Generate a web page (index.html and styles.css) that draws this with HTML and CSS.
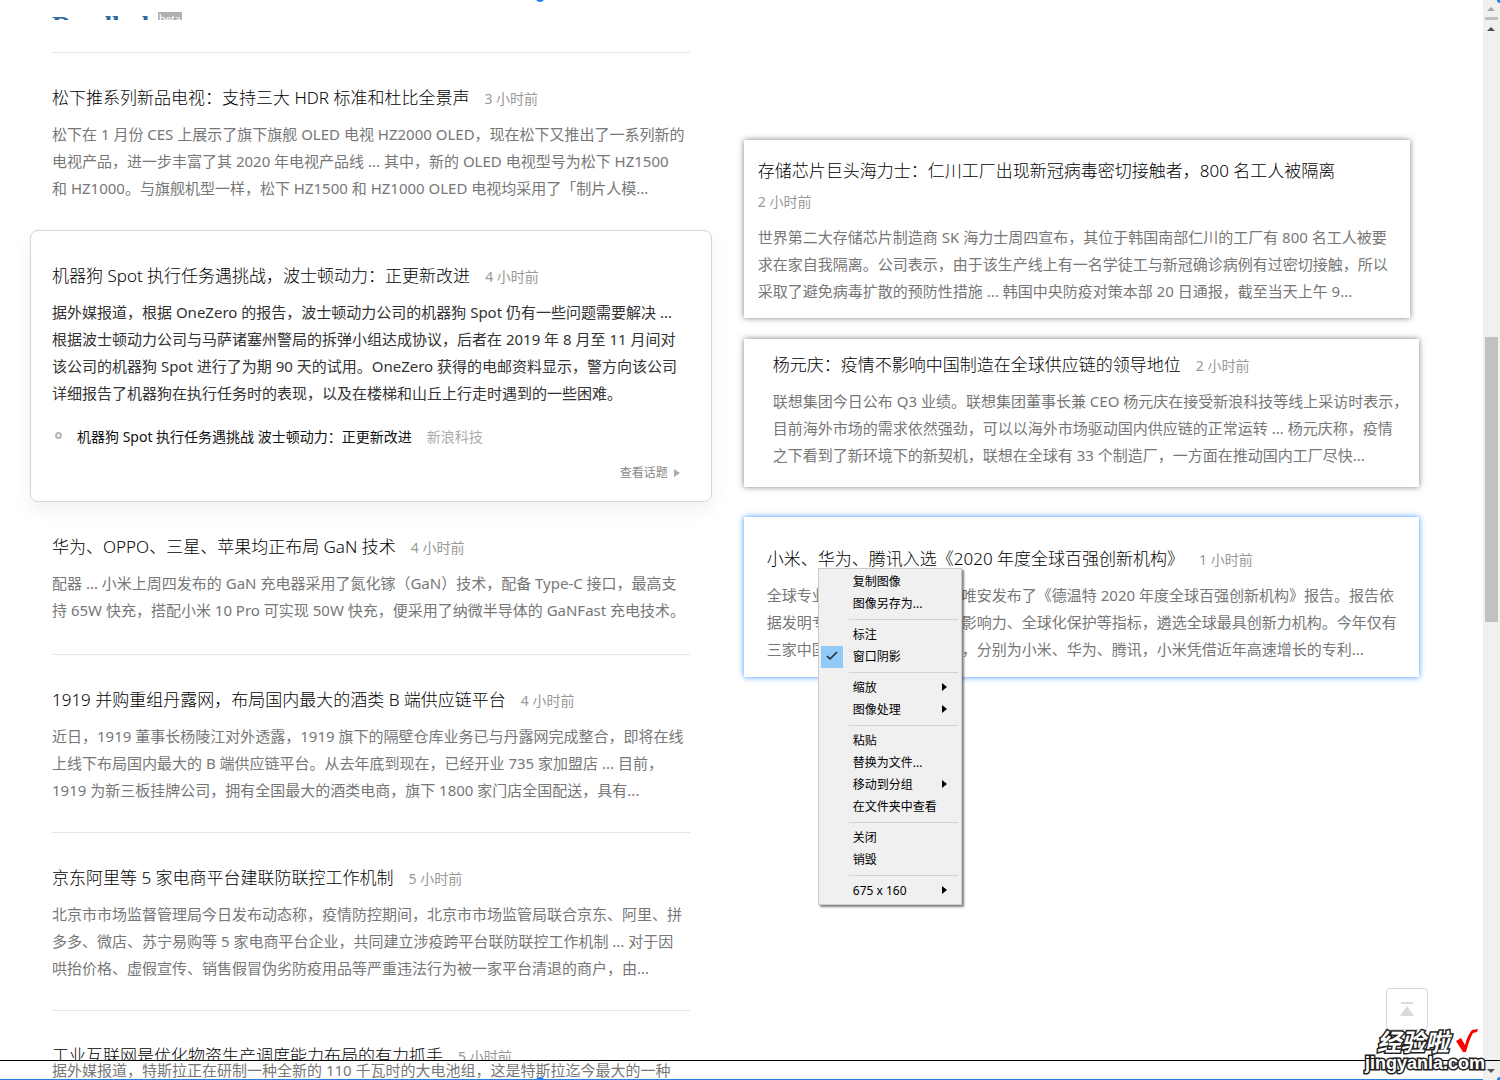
FILE: index.html
```html
<!DOCTYPE html>
<html lang="zh-CN">
<head>
<meta charset="utf-8">
<title>Readhub</title>
<link rel="stylesheet" href="styles.css">
</head>
<body>
<div class="page">
  <div class="content">
    <span class="handle handle-top"></span>
    <div class="columns">
      <main class="feed">
        <header class="brand"><a class="logo" href="#">Readhub</a><span class="beta">beta</span></header>
        <article class="story">
          <h2>松下推系列新品电视：支持三大 HDR 标准和杜比全景声<time>3 小时前</time></h2>
          <p>松下在 1 月份 CES 上展示了旗下旗舰 OLED 电视 HZ2000 OLED，现在松下又推出了一系列新的<br>电视产品，进一步丰富了其 2020 年电视产品线 ... 其中，新的 OLED 电视型号为松下 HZ1500<br>和 HZ1000。与旗舰机型一样，松下 HZ1500 和 HZ1000 OLED 电视均采用了「制片人模...</p>
        </article>
        <article class="story story-open">
          <h2>机器狗 Spot 执行任务遇挑战，波士顿动力：正更新改进<time>4 小时前</time></h2>
          <p>据外媒报道，根据 OneZero 的报告，波士顿动力公司的机器狗 Spot 仍有一些问题需要解决 ...<br>根据波士顿动力公司与马萨诸塞州警局的拆弹小组达成协议，后者在 2019 年 8 月至 11 月间对<br>该公司的机器狗 Spot 进行了为期 90 天的试用。OneZero 获得的电邮资料显示，警方向该公司<br>详细报告了机器狗在执行任务时的表现，以及在楼梯和山丘上行走时遇到的一些困难。</p>
          <ul class="sources">
            <li><a href="#">机器狗 Spot 执行任务遇挑战 波士顿动力：正更新改进</a><span>新浪科技</span></li>
          </ul>
          <a class="more" href="#">查看话题</a>
        </article>
        <article class="story story-short">
          <h2>华为、OPPO、三星、苹果均正布局 GaN 技术<time>4 小时前</time></h2>
          <p>配器 ... 小米上周四发布的 GaN 充电器采用了氮化镓（GaN）技术，配备 Type-C 接口，最高支<br>持 65W 快充，搭配小米 10 Pro 可实现 50W 快充，便采用了纳微半导体的 GaNFast 充电技术。</p>
        </article>
        <article class="story">
          <h2>1919 并购重组丹露网，布局国内最大的酒类 B 端供应链平台<time>4 小时前</time></h2>
          <p>近日，1919 董事长杨陵江对外透露，1919 旗下的隔壁仓库业务已与丹露网完成整合，即将在线<br>上线下布局国内最大的 B 端供应链平台。从去年底到现在，已经开业 735 家加盟店 ... 目前，<br>1919 为新三板挂牌公司，拥有全国最大的酒类电商，旗下 1800 家门店全国配送，具有...</p>
        </article>
        <article class="story">
          <h2>京东阿里等 5 家电商平台建联防联控工作机制<time>5 小时前</time></h2>
          <p>北京市市场监督管理局今日发布动态称，疫情防控期间，北京市市场监管局联合京东、阿里、拼<br>多多、微店、苏宁易购等 5 家电商平台企业，共同建立涉疫跨平台联防联控工作机制 ... 对于因<br>哄抬价格、虚假宣传、销售假冒伪劣防疫用品等严重违法行为被一家平台清退的商户，由...</p>
        </article>
        <article class="story">
          <h2>工业互联网是优化物资生产调度能力布局的有力抓手<time>5 小时前</time></h2>
        </article>
      </main>
      <section class="pins">
        <article class="pin pin-a">
          <h2>存储芯片巨头海力士：仁川工厂出现新冠病毒密切接触者，800 名工人被隔离</h2>
          <time>2 小时前</time>
          <p>世界第二大存储芯片制造商 SK 海力士周四宣布，其位于韩国南部仁川的工厂有 800 名工人被要<br>求在家自我隔离。公司表示，由于该生产线上有一名学徒工与新冠确诊病例有过密切接触，所以<br>采取了避免病毒扩散的预防性措施 ... 韩国中央防疫对策本部 20 日通报，截至当天上午 9...</p>
        </article>
        <article class="pin pin-b">
          <h2>杨元庆：疫情不影响中国制造在全球供应链的领导地位<time>2 小时前</time></h2>
          <p>联想集团今日公布 Q3 业绩。联想集团董事长兼 CEO 杨元庆在接受新浪科技等线上采访时表示，<br>目前海外市场的需求依然强劲，可以以海外市场驱动国内供应链的正常运转 ... 杨元庆称，疫情<br>之下看到了新环境下的新契机，联想在全球有 33 个制造厂，一方面在推动国内工厂尽快...</p>
        </article>
        <article class="pin pin-c">
          <h2>小米、华为、腾讯入选《2020 年度全球百强创新机构》<time>1 小时前</time></h2>
          <p>全球专业信息服务提供商科睿唯安发布了《德温特 2020 年度全球百强创新机构》报告。报告依<br>据发明专利的总数量、质量、影响力、全球化保护等指标，遴选全球最具创新力机构。今年仅有<br>三家中国大陆企业入选该榜单，分别为小米、华为、腾讯，小米凭借近年高速增长的专利...</p>
          <div class="menu" role="menu">
            <button type="button">复制图像</button>
            <button type="button">图像另存为...</button>
            <hr>
            <button type="button">标注</button>
            <button type="button" class="checked"><svg class="tick" viewBox="0 0 22 22" aria-hidden="true"><path d="M6 10l3 3 7-7" fill="none" stroke="#222" stroke-width="1.5"/></svg>窗口阴影</button>
            <hr>
            <button type="button" class="sub">缩放</button>
            <button type="button" class="sub">图像处理</button>
            <hr>
            <button type="button">粘贴</button>
            <button type="button">替换为文件...</button>
            <button type="button" class="sub">移动到分组</button>
            <button type="button">在文件夹中查看</button>
            <hr>
            <button type="button">关闭</button>
            <button type="button">销毁</button>
            <hr>
            <button type="button" class="sub">675 x 160</button>
          </div>
        </article>
      </section>
    </div>
    <footer class="strip"><p>据外媒报道，特斯拉正在研制一种全新的 110 千瓦时的大电池组，这是特斯拉迄今最大的一种</p></footer>
    <span class="handle handle-bottom"></span>
    <button type="button" class="to-top" aria-label="返回顶部"><svg viewBox="0 0 42 42" aria-hidden="true"><path d="M14 13h12v2H14zM20 17l7 10H13z" fill="#d9dadc"/></svg></button>
  </div>
  <div class="scrollbar">
    <svg viewBox="0 0 17 40" class="arrows" aria-hidden="true"><path d="M8 7l4 4H4z" fill="#a3a3a3"/><path d="M2 17h13v3H2z" fill="#c1c1c1"/><path d="M8 27l4 4H4z" fill="#505050"/><circle cx="17" cy="0" r="3" fill="#1a7cf0"/></svg>
    <div class="thumb"></div>
    <svg viewBox="0 0 17 17" class="arrow-down" aria-hidden="true"><path d="M4 6h8l-4 4z" fill="#505050"/><circle cx="17" cy="17" r="3" fill="#1a7cf0"/></svg>
  </div>
  <div class="watermark">
    <div class="mark-name">经验啦<svg viewBox="0 0 24 24" aria-hidden="true"><path d="M1 12l5-3 4 7Q13 5 17 1l6-1-1 3-4 1Q14 11 11 23H8z" fill="#f00"/></svg></div>
    <div class="mark-site">jingyanla.com</div>
  </div>
</div>
</body>
</html>
```
FILE: styles.css
```css
*, *::before, *::after { box-sizing: border-box; }

body {
  margin: 0;
  background: #fff;
  font-family: "Noto Sans", "Noto Sans CJK SC", sans-serif;
  color: #333;
}

a { color: inherit; text-decoration: none; }

h2, p, ul { margin: 0; padding: 0; font-weight: 400; }

.page {
  position: relative;
  display: flex;
  height: 100vh;
  overflow: hidden;
}

.content {
  position: relative;
  flex: 1;
  min-width: 0;
  display: flex;
  flex-direction: column;
}

.columns {
  flex: 1;
  min-height: 0;
  overflow: hidden;
  display: flex;
  gap: 32px;
}

.feed {
  width: 48%;
  max-width: 712px;
  padding-left: 30px;
}

.brand {
  display: flex;
  align-items: flex-start;
  gap: 1px;
  height: 53px;
  margin: 0 22px;
  border-bottom: 1px solid #e5e5e5;
}

.logo {
  height: 20px;
  padding-top: 12px;
  overflow: hidden;
  font: bold 27px/28px "Liberation Serif", serif;
  color: #2f6a9f;
}

.beta {
  height: 8px;
  margin-top: 12px;
  padding: 0 1px;
  overflow: hidden;
  font: 13px/13px "Liberation Serif", serif;
  background: #b0b0b0;
  color: #fff;
}

.story {
  padding: 31px 0 28px;
  margin: 0 22px;
  border-bottom: 1px solid #e5e5e5;
}

.story:has(+ .story-open) { border-bottom: 0; }

.story-short { min-height: 153px; }

h2 {
  font-size: 17px;
  font-weight: 300;
  line-height: 27px;
  white-space: nowrap;
  color: #000;
}

time {
  font-size: 14px;
  font-weight: 400;
  line-height: 27px;
  color: #999;
}

h2 time { margin-left: 15px; line-height: 1; }

p {
  margin-top: 10px;
  font-size: 15px;
  line-height: 27px;
  white-space: nowrap;
  color: #777;
}

.story-open {
  margin: 0;
  padding: 31px 21px 15px;
  border: 1px solid #d5d5d5;
  border-radius: 8px;
  box-shadow: 0 8px 20px rgba(0, 0, 0, 0.06);
}

.story-open p { color: #333; }

.sources {
  margin-top: 16px;
  list-style: none;
  font-size: 14px;
  line-height: 27px;
}

.sources li { display: flex; align-items: center; color: #111; }

.sources li::before {
  content: "";
  width: 7px;
  height: 7px;
  margin: 0 15px 3px 3px;
  border: 2px solid #b5b5b5;
  border-radius: 50%;
}

.sources span { margin-left: 15px; color: #aaa; }

.more {
  display: flex;
  justify-content: flex-end;
  align-items: center;
  gap: 6px;
  margin-top: 9px;
  padding-right: 10px;
  font-size: 12px;
  line-height: 27px;
  color: #888;
}

.more::after {
  content: "";
  border: 4px solid transparent;
  border-left: 6px solid #aaa;
  border-right: 0;
}

.pins {
  flex: 1;
  min-width: 0;
  padding: 140px 64px 0 0;
}

.pin {
  position: relative;
  box-shadow: 0 0 6px rgba(0, 0, 0, 0.5);
}

.pin-a { margin-right: 9px; padding: 17px 14px 13px; }
.pin-a time { display: block; margin-top: 4px; }
.pin-a p { margin-top: 9px; }

.pin-b { margin-top: 21px; padding: 12px 0 18px 29px; }

.pin-c {
  margin-top: 30px;
  padding: 28px 0 14px 23px;
  box-shadow: 0 0 6px #3d95ff;
}

/* context menu */
.menu {
  position: absolute;
  top: 51px;
  left: 74px;
  width: 144px;
  padding: 2px;
  border: 1px solid #ccc;
  background: #f0f0f0;
  box-shadow: 2px 2px 2px rgba(0, 0, 0, 0.5);
}

.menu button {
  position: relative;
  display: block;
  width: 100%;
  height: 22px;
  padding: 0 0 0 32px;
  border: 0;
  background: none;
  font: 12px/22px "Noto Sans", "Noto Sans CJK SC", sans-serif;
  text-align: left;
  color: #000;
}

.menu hr {
  height: 1px;
  margin: 4px 1px 4px 28px;
  border: 0;
  background: #d2d2d2;
}

.tick {
  position: absolute;
  top: 0;
  left: 0;
  width: 22px;
  height: 22px;
  background: #91c9f7;
}

.sub::after {
  content: "";
  position: absolute;
  top: 6px;
  right: 12px;
  border: 4px solid transparent;
  border-left: 5px solid #000;
  border-right: 0;
}

.strip {
  height: 20px;
  padding-left: 52px;
  overflow: hidden;
  border-top: 1px solid #000;
  border-bottom: 1px solid #2a7de1;
}

.strip p { margin-top: -4px; }

.handle {
  position: absolute;
  left: 536px;
  width: 8px;
  height: 8px;
  border-radius: 50%;
  background: #1a7cf0;
}

.handle-top { top: -6px; }
.handle-bottom { bottom: -5px; }

.to-top {
  position: absolute;
  right: 55px;
  bottom: 50px;
  width: 42px;
  height: 42px;
  padding: 0;
  border: 1px solid #d5d6d8;
  border-radius: 4px;
  background: #fff;
}

.to-top svg { display: block; width: 42px; height: 42px; }

.scrollbar {
  position: relative;
  display: flex;
  flex-direction: column;
  width: 17px;
  background: #f0f0f0;
}

.scrollbar::after {
  content: "";
  position: absolute;
  left: 0;
  right: 0;
  bottom: 19px;
  height: 1px;
  background: #000;
}

.arrows { height: 40px; }

.thumb {
  height: 285px;
  margin: 297px 2px auto;
  background: #c1c1c1;
}

.arrow-down { height: 17px; }

.watermark {
  position: absolute;
  right: 15px;
  bottom: 7px;
  color: #fff;
  -webkit-text-stroke: 3px #222;
  paint-order: stroke fill;
}

.mark-name {
  display: flex;
  align-items: center;
  justify-content: flex-end;
  gap: 6px;
  padding-right: 6px;
  font: italic bold 24px/24px "Noto Sans CJK SC", sans-serif;
}

.mark-name svg { width: 24px; height: 24px; }

.mark-site {
  font: bold 18px/20px "Liberation Sans", sans-serif;
  text-align: right;
}
```
